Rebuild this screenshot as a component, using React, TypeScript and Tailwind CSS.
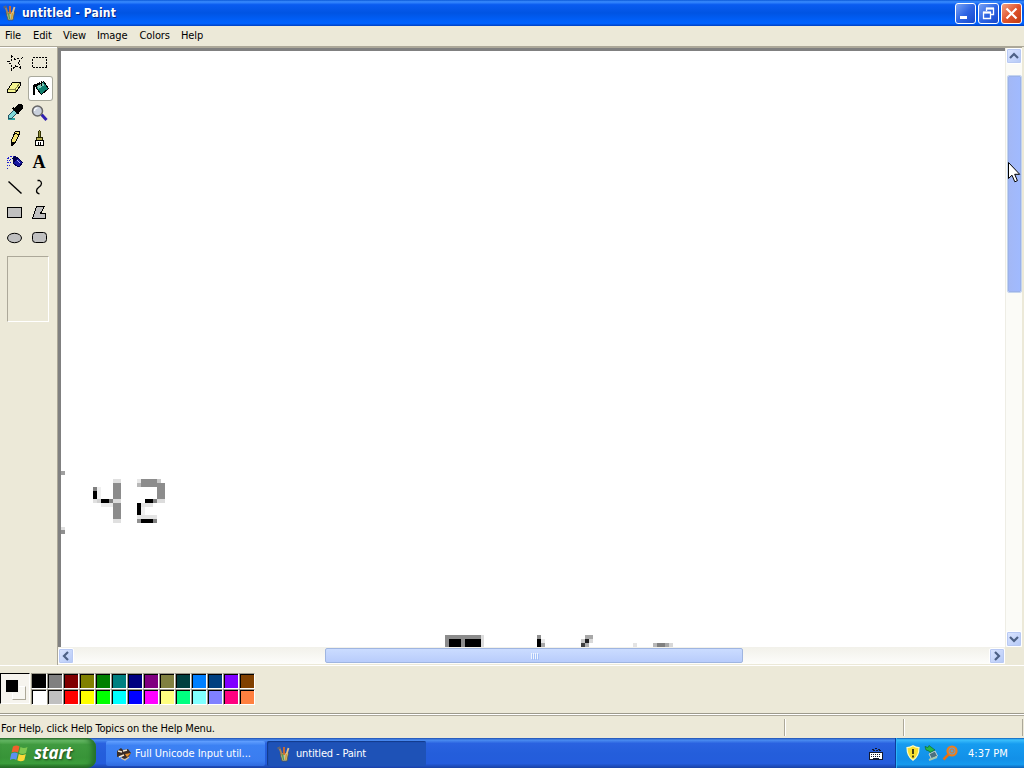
import type { ReactNode } from "react";

const TOP_COLORS = [
  "#000000", "#808080", "#800000", "#808000", "#008000", "#008080", "#000080",
  "#800080", "#808040", "#004040", "#0080ff", "#004080", "#8000ff", "#804000",
];
const BOTTOM_COLORS = [
  "#ffffff", "#c0c0c0", "#ff0000", "#ffff00", "#00ff00", "#00ffff", "#0000ff",
  "#ff00ff", "#ffff80", "#00ff80", "#80ffff", "#8080ff", "#ff0080", "#ff8040",
];

const MENUS = [
  { label: "File", width: "w-[28px]" },
  { label: "Edit", width: "w-[30px]" },
  { label: "View", width: "w-[34px]" },
  { label: "Image", width: "w-[42.5px]" },
  { label: "Colors", width: "w-[41.5px]" },
  { label: "Help", width: "w-[30px]" },
];

// x, y, width, height, fill. Everything sits on the 4px grid of the zoomed bitmap.
const PIXELS: [number, number, number, number, string][] = [
  [0, 420, 4, 4, "#a0a0a0"],
  [0, 476, 4, 4, "#e0e0e0"],
  [0, 479, 4, 4, "#909090"],
  // 4
  [32, 436, 4, 4, "#808080"],
  [32, 440, 4, 8, "#000"],
  [36, 436, 4, 12, "#f0f0f0"],
  [32, 448, 4, 4, "#e0e0e0"],
  [36, 448, 4, 4, "#d0d0d0"],
  [40, 448, 8, 4, "#000"],
  [48, 448, 4, 4, "#808080"],
  [40, 452, 12, 4, "#ececec"],
  [52, 428, 8, 4, "#e0e0e0"],
  [52, 432, 8, 16, "#8c8c8c"],
  [52, 448, 8, 4, "#dcdcdc"],
  [52, 452, 8, 16, "#8c8c8c"],
  [52, 468, 8, 4, "#e0e0e0"],
  // 2
  [76, 428, 4, 4, "#e8e8e8"],
  [76, 432, 4, 4, "#b8b8b8"],
  [80, 428, 16, 8, "#8c8c8c"],
  [96, 428, 4, 4, "#c8c8c8"],
  [96, 432, 8, 16, "#8c8c8c"],
  [84, 448, 8, 4, "#000"],
  [92, 448, 4, 4, "#808080"],
  [96, 448, 8, 4, "#dcdcdc"],
  [80, 452, 12, 4, "#e4e4e4"],
  [76, 452, 4, 12, "#000"],
  [80, 456, 4, 8, "#f0f0f0"],
  [76, 464, 20, 4, "#e4e4e4"],
  [76, 468, 4, 4, "#909090"],
  [80, 468, 12, 4, "#000"],
  [92, 468, 4, 4, "#808080"],
  // tops of the next line
  [384, 584, 36, 12, "#8c8c8c"],
  [420, 584, 3, 12, "#dcdcdc"],
  [388, 588, 12, 8, "#000"],
  [404, 588, 16, 8, "#000"],
  [476, 584, 4, 4, "#909090"],
  [476, 588, 4, 8, "#000"],
  [480, 588, 4, 4, "#e8e8e8"],
  [480, 592, 4, 4, "#a8a8a8"],
  [524, 584, 8, 4, "#a8a8a8"],
  [520, 588, 4, 4, "#c8c8c8"],
  [524, 588, 4, 4, "#202020"],
  [528, 588, 4, 4, "#d8d8d8"],
  [520, 592, 4, 4, "#404040"],
  [524, 592, 4, 4, "#b0b0b0"],
  [572, 592, 4, 4, "#e4e4e4"],
  [592, 592, 4, 4, "#b8b8b8"],
  [596, 592, 8, 4, "#808080"],
  [604, 592, 4, 4, "#a8a8a8"],
  [608, 592, 4, 4, "#d8d8d8"],
];

function Glyph({ children }: { children: ReactNode }) {
  return (
    <svg width="25" height="25" viewBox="0 0 25 25" className="block" shapeRendering="crispEdges">
      {children}
    </svg>
  );
}

const TOOLS: { name: string; icon: ReactNode }[] = [
  {
    name: "free-form select",
    icon: (
      <path
        d="M9.5 5.5l3.500 4 7-1.500-4 4.500 3.500 6-6-2.500-4 4 .5-5-4.500-3 4.500-1.500z"
        fill="none"
        stroke="#000"
        strokeDasharray="2.500 1.200"
      />
    ),
  },
  {
    name: "select",
    icon: <rect x="5.5" y="7.5" width="14" height="10" fill="none" stroke="#000" strokeDasharray="2 1" />,
  },
  {
    name: "eraser",
    icon: (
      <g strokeLinejoin="round">
        <path d="M5.5 15l5-7.500h8v3l-5 7h-8z" fill="#f4f490" stroke="#000" />
        <path d="M6 14.500h7l5-6.500M13 15v2" fill="none" stroke="#85854a" />
      </g>
    ),
  },
  {
    name: "fill",
    icon: (
      <g>
        <path d="M8.500 10l7-4.500 5 7-7 6-5-6z" fill="#108070" stroke="#000" />
        <path d="M9 10l6-3 1.500 2-6 4z" fill="#80c8b8" />
        <path d="M6 19v-7q0-3 3-3l3-2" fill="none" stroke="#000" strokeWidth="2.400" />
        <path d="M13.500 4.500v5" stroke="#000" />
      </g>
    ),
  },
  {
    name: "pick color",
    icon: (
      <g>
        <path d="M5 20h8v-2H8z" fill="#30a0a0" />
        <path d="M6.500 18.500v-3l6-6 3 3-6 6z" fill="#80d8d8" stroke="#205060" />
        <path d="M11 8l6 6M13 9l4-4h2l1 1v2l-4 4z" fill="#000" stroke="#000" strokeWidth="1.6" />
      </g>
    ),
  },
  {
    name: "magnifier",
    icon: (
      <g shapeRendering="auto">
        <path d="M14.500 14.500l5 5.500" stroke="#3020b0" strokeWidth="3" />
        <circle cx="10.500" cy="11" r="5" fill="#c9d0dc" stroke="#666" strokeWidth="1.500" />
        <path d="M7.500 11q0-3 3-3" fill="none" stroke="#fff" strokeWidth="1.200" />
      </g>
    ),
  },
  {
    name: "pencil",
    icon: (
      <g>
        <path d="M9.500 15.500l4-9.500h2l2 1v2l-4 8-3 3h-1z" fill="#f0e070" stroke="#000" />
        <path d="M13 8l4 2" stroke="#000" />
        <path d="M9 17h3l-3 3.500z" fill="#000" />
      </g>
    ),
  },
  {
    name: "brush",
    icon: (
      <g>
        <path d="M11.500 13v-5q0-2.500 1-2.500t1 2.500v5z" fill="#909040" stroke="#303000" />
        <path d="M9.500 12.500h6v3h-6z" fill="#b8b050" stroke="#202000" />
        <path d="M8.500 15.500h8v5h-8z" fill="#fff" stroke="#000" />
        <path d="M11.500 17v3M13.500 17v3" stroke="#000" />
      </g>
    ),
  },
  {
    name: "airbrush",
    icon: (
      <g>
        <path
          d="M5 18.500h1M5 12.500h2M7 15.500h1M5 8.500h2M8 6.500h2M10 8.500h1M8 9.500h1M5 15.500h1M8 12.500h1M6 7.500h1M11 6.500h1M5 10.500h1M7 10.500h1"
          stroke="#2020d0"
        />
        <path d="M11.500 10.500l3-3h1l5 5-3 4h-2l-4-3z" fill="#1818a0" stroke="#000050" />
        <path d="M10 8l3-2 3 2-4 4z" fill="#000050" />
        <path d="M15 10l3 3" stroke="#b0b0ff" />
      </g>
    ),
  },
  {
    name: "text",
    icon: (
      <text x="12" y="18" textAnchor="middle" fontSize="18" fontWeight="700" fontFamily="Liberation Serif, serif">
        A
      </text>
    ),
  },
  { name: "line", icon: <path d="M6.5 6.5l13 12" stroke="#000" strokeWidth="1.400" shapeRendering="auto" /> },
  {
    name: "curve",
    icon: (
      <path d="M10.5 5.5h2q2 1 2 3t-3 4q-2 1.500-2 3.500t3 3" fill="none" stroke="#000" strokeWidth="1.300" shapeRendering="auto" />
    ),
  },
  { name: "rectangle", icon: <rect x="5.500" y="7.500" width="14" height="10" fill="#c0c0c0" stroke="#000" /> },
  {
    name: "polygon",
    icon: <path d="M9.500 6.500h8l-4 7h5v5h-13z" fill="#c0c0c0" stroke="#000" />,
  },
  {
    name: "ellipse",
    icon: <ellipse cx="12.500" cy="13" rx="7" ry="4.700" fill="#c0c0c0" stroke="#000" shapeRendering="auto" />,
  },
  {
    name: "rounded rectangle",
    icon: <rect x="5.500" y="7.500" width="14" height="10" rx="3" fill="#c0c0c0" stroke="#000" shapeRendering="auto" />,
  },
];

function PaintIcon() {
  return (
    <svg width="16" height="16" viewBox="0 0 16 16" className="shrink-0">
      <path d="M4 7h8.500l-1.500 8h-5z" fill="#b9c3a4" stroke="#5b5440" strokeWidth=".8" />
      <path d="M3 1l3.500 9" stroke="#a98458" strokeWidth="1.800" />
      <path d="M8 1v8" stroke="#d86a28" strokeWidth="1.800" />
      <path d="M12.500 2l-2.500 8" stroke="#e8c080" strokeWidth="1.800" />
      <path d="M6.500 8l1 6" stroke="#5a9c50" strokeWidth="1.500" />
      <path d="M10.500 8l-1 6" stroke="#d8a030" strokeWidth="1.500" />
      <path d="M1.500 2.500l3-1" stroke="#5d6478" strokeWidth="2" />
    </svg>
  );
}

function CaptionButton({ close, children }: { close?: boolean; children: ReactNode }) {
  return (
    <div
      className={
        "h-[21px] w-[21px] rounded-[3px] border border-white " +
        (close
          ? "bg-linear-to-br from-[#f0a080] via-[#e0532c] to-[#c03c10]"
          : "bg-linear-to-br from-[#7aa2f4] via-[#2e65e4] to-[#1648cc]")
      }
    >
      <svg width="19" height="19" viewBox="0 0 19 19" className="block">
        {children}
      </svg>
    </div>
  );
}

function ScrollButton({ d }: { d: string }) {
  return (
    <div className="h-[16px] w-[16px] shrink-0 rounded-[2px] border border-white bg-linear-to-br from-[#dce6ff] to-[#b4c8f6] shadow-[inset_0_0_0_1px_#b8c9f3]">
      <svg width="14" height="14" viewBox="0 0 14 14" className="block">
        <path d={d} fill="none" stroke="#4d6185" strokeWidth="2.200" />
      </svg>
    </div>
  );
}

function Swatch({ color }: { color: string }) {
  return (
    <div className="h-4 w-4 border border-t-[#9d9a8c] border-r-white border-b-white border-l-[#9d9a8c]">
      <div className="h-[14px] w-[14px] border-t border-l border-black" style={{ backgroundColor: color }} />
    </div>
  );
}

function TitleBar() {
  return (
    <div className="flex h-[26px] items-center bg-[linear-gradient(#0a58d8_0%,#3a8cff_7%,#0a5cf0_18%,#0054e3_50%,#0060fa_80%,#0062ff_90%,#0040c0_100%)] pr-[2px] pl-[2px]">
      <PaintIcon />
      <span className="ml-1 flex-1 text-[12px] font-bold tracking-[0.15px] whitespace-nowrap text-white [text-shadow:1px_1px_#0a2a88]">
        untitled - Paint
      </span>
      <div className="flex gap-[2px]">
        <CaptionButton>
          <path d="M4 13.500h7" stroke="#fff" strokeWidth="3" />
        </CaptionButton>
        <CaptionButton>
          <path d="M7.500 7V4.500h7v6H12" fill="none" stroke="#fff" strokeWidth="1.300" />
          <path d="M7 4.500h8" stroke="#fff" strokeWidth="2" />
          <path d="M4.500 8.500h7v6h-7z" fill="none" stroke="#fff" strokeWidth="1.300" />
          <path d="M4 8.500h8" stroke="#fff" strokeWidth="2" />
        </CaptionButton>
        <CaptionButton close>
          <path d="M4.500 4.500l10 10M14.500 4.500l-10 10" stroke="#fff" strokeWidth="2.200" />
        </CaptionButton>
      </div>
    </div>
  );
}

function Toolbox() {
  return (
    <div className="w-[57px] shrink-0 border-t border-white pt-[2px] pl-[2px]">
      <div className="grid w-[50px] grid-cols-2">
        {TOOLS.map((t) => (
          <div
            key={t.name}
            className={
              "h-[25px] w-[25px] " +
              (t.name === "fill" ? "translate-x-px translate-y-px rounded-[3px] bg-white shadow-[inset_0_0_0_1px_#a9a99c]" : "")
            }
          >
            <Glyph>{t.icon}</Glyph>
          </div>
        ))}
      </div>
      <div className="mt-[6px] ml-[5px] h-[66px] w-[42px] border border-t-[#aca899] border-r-white border-b-white border-l-[#aca899]" />
    </div>
  );
}

function Canvas() {
  return (
    <svg width="944" height="596" viewBox="0 0 944 596" className="block bg-white" shapeRendering="crispEdges">
      {PIXELS.map(([x, y, w, h, fill], i) => (
        <rect key={i} x={x} y={y} width={w} height={h} fill={fill} />
      ))}
    </svg>
  );
}

function VerticalScroll() {
  return (
    <div className="flex w-[17px] shrink-0 flex-col items-center border-l border-[#eeede5] bg-[#fbfbf7]">
      <ScrollButton d="M3 9l4-4 4 4" />
      <div className="mt-[11px] h-[218px] w-[15px] rounded-[2px] border border-white bg-linear-to-r from-[#a3b8f5] to-[#a0baff] shadow-[inset_0_0_0_1px_#9cb2ea] outline-1 -outline-offset-1 outline-[#c4d4ee]" />
      <div className="flex-1" />
      <ScrollButton d="M3 5l4 4 4-4" />
    </div>
  );
}

function HorizontalScroll() {
  return (
    <div className="flex h-[17px] items-center bg-linear-to-b from-[#f2f1ea] to-[#fdfdfb]">
      <ScrollButton d="M9 3L5 7l4 4" />
      <div className="ml-[251px] flex h-[15px] w-[418px] items-center justify-center gap-px rounded-[2px] border border-[#9fb5e0] bg-linear-to-b from-[#cbdcff] to-[#b8ccfb]">
        {[0, 1, 2, 3].map((i) => (
          <div key={i} className="h-[6px] w-px border-l border-[#eef4fe] shadow-[1px_1px_#a4c0f8]" />
        ))}
      </div>
      <div className="flex-1" />
      <ScrollButton d="M5 3l4 4-4 4" />
    </div>
  );
}

function Palette() {
  return (
    <div className="flex h-[48px] items-start border-t border-white pt-[7px]">
      <div className="mr-px h-[31px] w-[30px] border border-t-black border-r-white border-b-white border-l-black bg-[#f6f4ee] pt-[5px] pl-[4px]">
        <div className="grid">
          <div className="col-start-1 row-start-1 mt-[7px] ml-[7px] h-[14px] w-[14px] border border-t-white border-r-[#aca899] border-b-[#aca899] border-l-white bg-[#f8f7f2]" />
          <div className="col-start-1 row-start-1 h-[14px] w-[14px] border border-[#f4f3ee] bg-black" />
        </div>
      </div>
      <div className="grid grid-cols-[repeat(14,16px)]">
        {[...TOP_COLORS, ...BOTTOM_COLORS].map((c) => (
          <Swatch key={c} color={c} />
        ))}
      </div>
    </div>
  );
}

function StatusBar() {
  return (
    <div className="flex h-[25px] border-t border-[#9d9a8c] text-[11px]">
      <div className="flex flex-1 border-t border-white">
        <div className="flex flex-1 border-t border-[#aca899] pt-[3px] pb-[2px]">
          <div className="w-[785px] border-r border-[#aca899] pl-px leading-[20px] tracking-[-0.19px] whitespace-nowrap">
            For Help, click Help Topics on the Help Menu.
          </div>
          <div className="w-[119px] border-r border-l border-r-[#aca899] border-l-white" />
          <div className="w-[119px] border-r border-l border-r-[#aca899] border-l-white" />
        </div>
      </div>
    </div>
  );
}

function TaskBar() {
  return (
    <div className="flex h-[30px] bg-[linear-gradient(#1f4fb0_0%,#4a8cf0_7%,#2a62e0_18%,#245edb_50%,#245cdc_85%,#1941a5_100%)] text-[11px] text-white">
      <div className="flex w-[96px] items-center rounded-r-[9px] bg-[linear-gradient(#2c6a2c_0%,#6cbf6a_8%,#3f9a3f_22%,#389438_65%,#3c9e3c_85%,#226622_100%)] pl-[10px] shadow-[inset_-4px_0_5px_#24702a]">
        <svg width="20" height="19" viewBox="0 0 20 19">
          <path d="M3 2.500q3.500-2 6.500 0L8 8.500q-3-1.500-6.500 0z" fill="#f0602c" />
          <path d="M10.500 3q3.500 2 7 0L16 9q-3.500 2-7 0z" fill="#7fc850" />
          <path d="M1.300 9.500q3.500-2 6.500 0L6.300 16q-3-1.800-6.500 0z" fill="#5c90f0" />
          <path d="M8.800 10q3.500 2 7 0l-1.500 6.300q-3.500 2-7 0z" fill="#fcd838" />
        </svg>
        <span className="mb-px ml-[4px] font-['Open_Sans',sans-serif] text-[17px] leading-none font-bold tracking-[-0.2px] italic [text-shadow:1px_1px_2px_#1c4a1c]">
          start
        </span>
      </div>
      <div className="mt-[3px] ml-[10px] flex h-[25px] w-[159px] items-center rounded-[2px] bg-[linear-gradient(#62a0ff,#3c81f3_18%,#3a7cf0_80%,#2f6ade)] pl-[10px]">
        <svg width="16" height="16" viewBox="0 0 16 16" className="shrink-0">
          <path d="M1 5l4-3 2 2 5-1 3 4-3 5-5 1-2-3-4 1z" fill="#3a2c24" />
          <path d="M2 5l4 1M7 5l4-1M3 11l5-2" stroke="#f4e8d0" strokeWidth="1.400" />
          <path d="M9 8l6-1-4 4z" fill="#e8922c" />
          <path d="M5 12l4 2 4-3" fill="none" stroke="#d8c4a0" strokeWidth="1.200" />
        </svg>
        <span className="mt-[2px] ml-[3px] tracking-[-0.05px] whitespace-nowrap">Full Unicode Input util...</span>
      </div>
      <div className="mt-[3px] ml-[2px] flex h-[25px] w-[159px] items-center rounded-[2px] bg-[#1e52b7] pl-[9px] shadow-[inset_1px_1px_1px_#123a8a]">
        <PaintIcon />
        <span className="mt-[2px] ml-[4px] tracking-[-0.15px] whitespace-nowrap">untitled - Paint</span>
      </div>
      <div className="flex flex-1 items-center justify-end pr-[12px]">
        <svg width="14" height="14" viewBox="0 0 14 14" className="mt-[2px]" shapeRendering="crispEdges">
          <path d="M3 2.500h2M6 1.500h2M9 2.500h3M4 3.500h8" stroke="#101830" strokeDasharray="2 1" />
          <rect x=".5" y="5.500" width="13" height="7" fill="#fff" stroke="#101830" />
          <path d="M2 7.500h10M2 9.500h10" stroke="#101830" strokeDasharray="1 1" />
          <path d="M4 11.500h6" stroke="#101830" />
        </svg>
      </div>
      <div className="flex w-[129px] items-center border-l border-[#0c3c9c] bg-[linear-gradient(#0c5cb8_0%,#3cc0fc_6%,#169cf0_20%,#1290e8_70%,#169aee_88%,#0c62b8_100%)] pl-[9px] shadow-[inset_1px_0_#2cb4f8]">
        <svg width="16" height="16" viewBox="0 0 16 16">
          <path d="M8 .8q3 1.800 6 1.800 0 9-6 12.700Q2 11.600 2 2.600q3 0 6-1.800z" fill="#f8e030" stroke="#fffcc0" strokeWidth="1.200" />
          <path d="M8 4v5M8 10.500v2" stroke="#303010" strokeWidth="1.800" />
        </svg>
        <svg width="16" height="16" viewBox="0 0 16 16" className="ml-[3px]">
          <path d="M5 9l6-3 2.500 5-6 3z" fill="#4c7080" stroke="#c8d4d0" strokeWidth="1" />
          <path d="M1 1.500l3 1 1-2L11 5 6 7.500 5 6 2 5z" fill="#28b848" stroke="#106020" strokeWidth=".6" />
          <path d="M5 15l8-3" stroke="#a8c8b0" strokeWidth="2" />
        </svg>
        <svg width="17" height="16" viewBox="0 0 17 16" className="ml-[2px]">
          <circle cx="10" cy="6" r="4.500" fill="#6aa0c8" stroke="#f07c18" strokeWidth="2.200" />
          <circle cx="10" cy="6" r="2" fill="none" stroke="#d87828" />
          <path d="M6.500 9.500l-5 5" stroke="#e87010" strokeWidth="2.500" />
        </svg>
        <span className="mt-[2px] ml-[9px] whitespace-nowrap">4:37 PM</span>
      </div>
    </div>
  );
}

export default function App() {
  return (
    <div className="flex h-[768px] w-[1024px] flex-col overflow-hidden bg-[#ece9d8] font-['DejaVu_Sans_Condensed','DejaVu_Sans',sans-serif] text-black">
      <TitleBar />
      <div className="flex h-[20px] items-center pb-[2px] pl-[5px] text-[11px] leading-none">
        {MENUS.map((m) => (
          <span key={m.label} className={"tracking-[-0.1px] " + m.width}>
            {m.label}
          </span>
        ))}
      </div>
      <div className="flex h-[619px] border-t border-[#aca899]">
        <Toolbox />
        <div className="flex w-[965px] shrink-0 flex-col border-t border-l border-[#aca899]">
          <div className="flex h-[599px]">
            <div className="w-[947px] shrink-0 border-t-[3px] border-l-[3px] border-[#808080] bg-white">
              <Canvas />
            </div>
            <VerticalScroll />
          </div>
          <div className="w-[947px]">
            <HorizontalScroll />
          </div>
        </div>
      </div>
      <Palette />
      <StatusBar />
      <TaskBar />
      <svg width="13" height="22" viewBox="0 0 13 22" className="absolute top-[162px] left-[1008px]">
        <path d="M.5.500v16l3.500-3.300 2.800 6.600 2.600-1.100-2.700-6.400h5z" fill="#fff" stroke="#000" />
      </svg>
    </div>
  );
}
